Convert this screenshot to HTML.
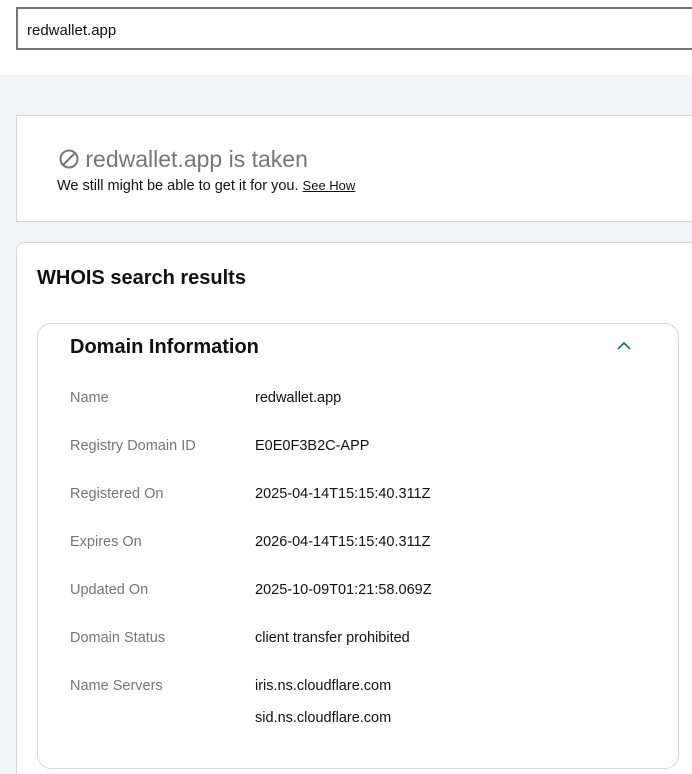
<!DOCTYPE html>
<html><head><style>
html,body{margin:0;width:692px;height:774px;overflow:hidden}
body{background:#f4f5f6;font-family:"Liberation Sans",sans-serif;position:relative}
.top{position:absolute;left:0;top:0;width:692px;height:75px;background:#fff}
.inp{position:absolute;left:16px;top:7px;width:690px;height:39px;border:2px solid #767676;background:#fff}
.inp span{position:absolute;left:9px;top:13px;font-size:15px;color:#111}
.c1{position:absolute;left:16px;top:115px;width:700px;height:105px;border:1px solid #d4d7db;background:#fff}
.t1{position:absolute;left:42px;top:30px;font-size:23px;color:#767676}
.t2{position:absolute;left:40px;top:62px;font-size:14.5px;color:#111}
.t2 u{font-size:13px}
.c2{position:absolute;left:16px;top:242px;width:700px;height:540px;border:1px solid #d4d7db;border-radius:8px;background:#fff}
.h{position:absolute;left:20px;top:24px;font-size:20px;font-weight:bold;color:#111}
.c3{position:absolute;left:20px;top:80px;width:640px;height:444px;border:1px solid #d4d7db;border-radius:14px}
.h2{position:absolute;left:32px;top:12px;font-size:20px;font-weight:bold;color:#111}
.r{position:absolute;font-size:14.5px}
.l{left:32px;color:#767676}
.v{left:217px;color:#111}
</style></head><body>
<div class="top"></div>
<div class="inp"><span>redwallet.app</span></div>
<div class="c1">
<div class="t1"><svg width="20" height="20" viewBox="0 0 20 20" style="vertical-align:-2px"><circle cx="10" cy="10" r="8.5" fill="none" stroke="#767676" stroke-width="2"/><line x1="4" y1="16" x2="16" y2="4" stroke="#767676" stroke-width="2"/></svg> redwallet.app is taken</div>
<div class="t2">We still might be able to get it for you. <u>See How</u></div>
</div>
<div class="c2">
<div class="h">WHOIS search results</div>
<div class="c3">
<div class="h2">Domain Information</div>
<svg style="position:absolute;left:578px;top:17px" width="16" height="10" viewBox="0 0 16 10"><path d="M2 8 L8 2 L14 8" fill="none" stroke="#1f7a73" stroke-width="1.8"/></svg>
<div class="r l" style="top:66px">Name</div><div class="r v" style="top:66px">redwallet.app</div>
<div class="r l" style="top:114px">Registry Domain ID</div><div class="r v" style="top:114px">E0E0F3B2C-APP</div>
<div class="r l" style="top:162px">Registered On</div><div class="r v" style="top:162px">2025-04-14T15:15:40.311Z</div>
<div class="r l" style="top:210px">Expires On</div><div class="r v" style="top:210px">2026-04-14T15:15:40.311Z</div>
<div class="r l" style="top:258px">Updated On</div><div class="r v" style="top:258px">2025-10-09T01:21:58.069Z</div>
<div class="r l" style="top:306px">Domain Status</div><div class="r v" style="top:306px">client transfer prohibited</div>
<div class="r l" style="top:354px">Name Servers</div><div class="r v" style="top:354px">iris.ns.cloudflare.com</div>
<div class="r v" style="top:386px">sid.ns.cloudflare.com</div>
</div>
</div>
</body></html>
